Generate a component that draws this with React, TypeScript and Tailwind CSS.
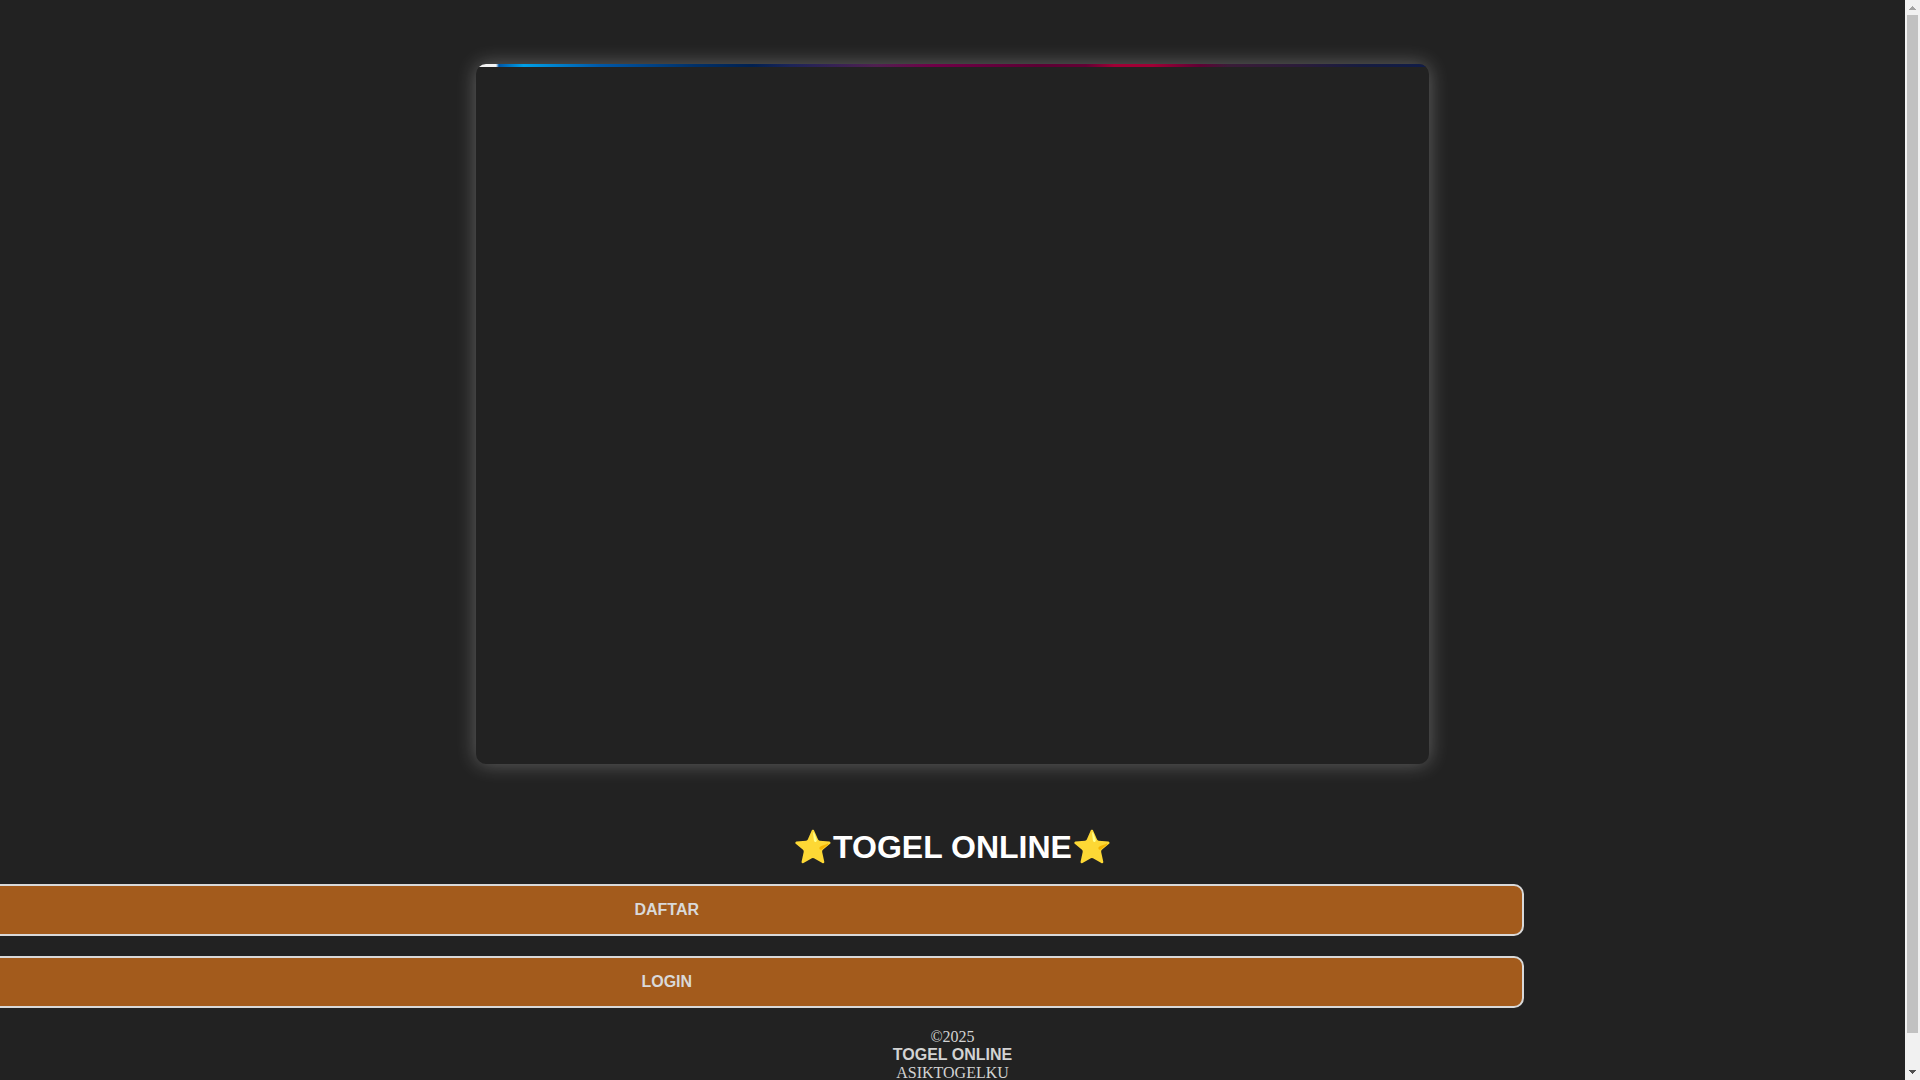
import React from "react";

const links = [
  { id: 1, label: "DAFTAR", href: "#daftar" },
  { id: 2, label: "LOGIN", href: "#login" },
];

const BannerCard: React.FC = () => {
  return (
    <section className="mx-auto mt-16 w-1/2 h-[700px] overflow-hidden rounded-[10px] shadow-[0_0_20px_rgba(255,255,255,0.3)]">
      <div className="h-[3px] bg-[linear-gradient(90deg,#f4f4f4_0%,#f4f4f4_2.1%,#0058a8_2.4%,#00a0e8_5%,#0058a8_13%,#003068_23%,#002050_29%,#1c2458_33%,#502050_42%,#700048_48%,#5c0034_59%,#640034_64%,#a00035_67%,#a00035_71%,#600034_76%,#3a1c38_79%,#2c1c3a_86%,#161c40_93%,#101c48_100%)]"></div>
    </section>
  );
};

const ScrollBar: React.FC = () => {
  return (
    <div className="flex w-[15px] shrink-0 flex-col items-center bg-[#f1f1f1]">
      <div className="flex h-[15px] items-center">
        <svg width="7" height="4" viewBox="0 0 7 4" shapeRendering="crispEdges">
          <path d="M3 0h1v1h1v1h1v1h1v1H0V3h1V2h1V1h1z" fill="#a3a3a3" />
        </svg>
      </div>
      <div className="w-[11px] grow bg-[#c1c1c1]"></div>
      <div className="flex h-[47px] items-end pb-[6px]">
        <svg width="7" height="4" viewBox="0 0 7 4" shapeRendering="crispEdges">
          <path d="M0 0h7v1H6v1H5v1H4v1H3V3H2V2H1V1H0z" fill="#505050" />
        </svg>
      </div>
    </div>
  );
};

const App: React.FC = () => {
  return (
    <div className="flex h-screen overflow-hidden bg-[#222222]">
      <main className="min-w-0 flex-1 overflow-hidden">
        <BannerCard />

        <h1 className="mt-16 text-center font-['Liberation_Sans',Arial,sans-serif] text-[32px] leading-[38px] font-bold text-white">
          ⭐TOGEL ONLINE⭐
        </h1>

        <nav className="mt-[18px] -ml-[10%] flex w-[90%] flex-col gap-5">
          {links.map((link) => (
            <a
              key={link.id}
              href={link.href}
              className="rounded-[10px] border-2 border-[#d9d9d9] bg-[#a35b1c] py-[15px] text-center font-['Liberation_Sans',Arial,sans-serif] text-base leading-[18px] font-bold text-[#d9d9d9]"
            >
              {link.label}
            </a>
          ))}
        </nav>

        <footer className="mt-5 text-center font-['Liberation_Serif','Times_New_Roman',serif] text-base leading-[18px] text-[#d3d3d3]">
          <p>©2025</p>
          <p className="font-['Liberation_Sans',Arial,sans-serif] font-bold">
            TOGEL ONLINE
          </p>
          <p>ASIKTOGELKU</p>
        </footer>
      </main>
      <ScrollBar />
    </div>
  );
};

export default App;
